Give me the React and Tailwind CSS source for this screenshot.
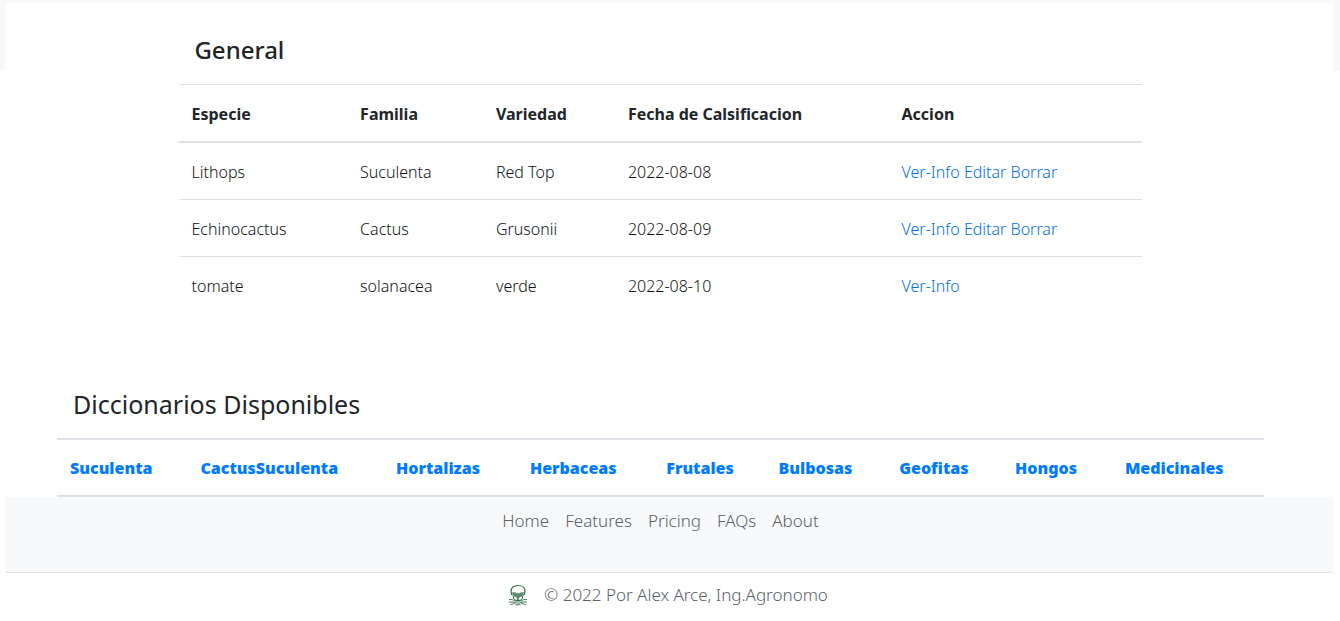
const plants = [
  { especie: "Lithops", familia: "Suculenta", variedad: "Red Top", fecha: "2022-08-08", acciones: ["Ver-Info", "Editar", "Borrar"] },
  { especie: "Echinocactus", familia: "Cactus", variedad: "Grusonii", fecha: "2022-08-09", acciones: ["Ver-Info", "Editar", "Borrar"] },
  { especie: "tomate", familia: "solanacea", variedad: "verde", fecha: "2022-08-10", acciones: ["Ver-Info"] },
];

const columns = [
  { label: "Especie", width: "w-[17.5%]" },
  { label: "Familia", width: "w-[14.1%]" },
  { label: "Variedad", width: "w-[13.7%]" },
  { label: "Fecha de Calsificacion", width: "w-[28.4%]" },
  { label: "Accion", width: "w-[26.3%]" },
];

const dictionaries = [
  { label: "Suculenta", width: "w-[10.8%]" },
  { label: "CactusSuculenta", width: "w-[16.2%]" },
  { label: "Hortalizas", width: "w-[11.1%]" },
  { label: "Herbaceas", width: "w-[11.3%]" },
  { label: "Frutales", width: "w-[9.3%]" },
  { label: "Bulbosas", width: "w-[10%]" },
  { label: "Geofitas", width: "w-[9.6%]" },
  { label: "Hongos", width: "w-[9.1%]" },
  { label: "Medicinales", width: "w-[12.6%]" },
];

const links = ["Home", "Features", "Pricing", "FAQs", "About"];

function Logo() {
  return (
    <svg viewBox="0 0 20 22" className="h-[22px] w-5 shrink-0" fill="none" stroke="#2f6b45" aria-hidden="true">
      <path d="M4.500 11.500C3.200 9.800 3 8.600 3 7.200C3 4 5.600 1.500 10 1.500S17 4 17 7.200C17 8.600 16.800 9.800 15.500 11.500" strokeWidth="1.200" />
      <path d="M4.500 8.500C6 8 8 9.500 10 9.500S14 8 15.500 8.500L14 12L10.700 13.500V16H9.300V13.500L6 12Z" fill="#5c8b6c" strokeWidth="0.500" />
      <path d="M5.500 12V14.500L8 16.500H12L14.500 14.500V12" strokeWidth="1" />
      <path d="M1 15.500C3.500 15 5.500 16 7 17H13C14.500 16 16.500 15 19 15.500M1 18H6L8 19H12L14 18H19M2 20.500C4 20 6 20 7 18.800M18 20.500C16 20 14 20 13 18.800M7.500 20.800H12.500" strokeWidth="0.900" />
    </svg>
  );
}

export default function App() {
  return (
    <div className="bg-white font-['Noto_Sans','Open_Sans',sans-serif] text-[16px] leading-6 text-[#212529]">
      <header className="bg-[#f8f9fb] pt-[3px] pr-[7px] pl-[6px]">
        <div className="bg-white pt-[31px] pr-[14.3%] pb-[5px] pl-[14.2%]">
          <h2 className="text-[24px] leading-8 font-medium">General</h2>
        </div>
      </header>

      <main className="pr-[7px] pl-[6px]">
        <div className="pt-[13px] pr-[14.4%] pl-[13%]">
          <table className="w-full table-fixed border-separate border-spacing-0 text-left">
            <thead>
              <tr>
                {columns.map((c) => (
                  <th key={c.label} scope="col" className={`${c.width} border-t border-b-2 border-[#dee2e6] pt-[17px] pr-3 pb-[15px] pl-[13px] font-bold whitespace-nowrap`}>
                    {c.label}
                  </th>
                ))}
              </tr>
            </thead>
            <tbody className="font-light text-[#111417] [&>tr:not(:last-child)>td]:border-b">
              {plants.map((p) => (
                <tr key={p.especie} className="[&>td]:border-[#dee2e6] [&>td]:pt-[17px] [&>td]:pr-3 [&>td]:pb-[15px] [&>td]:pl-[13px]">
                  <td>{p.especie}</td>
                  <td>{p.familia}</td>
                  <td>{p.variedad}</td>
                  <td>{p.fecha}</td>
                  <td className="whitespace-nowrap text-[#0070f0]">
                    {p.acciones.map((a, i) => (
                      <span key={a}>
                        {i > 0 && " "}
                        <a href="#">{a}</a>
                      </span>
                    ))}
                  </td>
                </tr>
              ))}
            </tbody>
          </table>
        </div>

        <section className="pt-[75px] pr-[5.2%] pl-[3.85%]">
          <h2 className="px-4 text-[25px] leading-8 font-normal">Diccionarios Disponibles</h2>
          <table className="mt-[18px] w-full table-fixed border-separate border-spacing-0 text-left">
            <tbody>
              <tr>
                {dictionaries.map((d) => (
                  <th key={d.label} scope="col" className={`${d.width} border-y-2 border-[#dee2e6] pt-4 pr-3 pb-[15px] pl-[13px] font-black whitespace-nowrap text-[#007bff]`}>
                    <a href="#">{d.label}</a>
                  </th>
                ))}
              </tr>
            </tbody>
          </table>
        </section>
      </main>

      <footer className="pr-[7px] pl-[6px] text-[17px] font-light text-[#596169]">
        <nav className="border-b border-[#dee2e6] bg-[#f8f9fb] pt-3 pb-[39px]">
          <ul className="flex justify-center gap-4 pr-[18px]">
            {links.map((l) => (
              <li key={l}>
                <a href="#">{l}</a>
              </li>
            ))}
          </ul>
        </nav>
        <div className="flex items-center justify-center gap-4 pt-[10px] pr-[3px] pb-3">
          <Logo />
          <p>© 2022 Por Alex Arce, Ing.Agronomo</p>
        </div>
      </footer>
    </div>
  );
}
